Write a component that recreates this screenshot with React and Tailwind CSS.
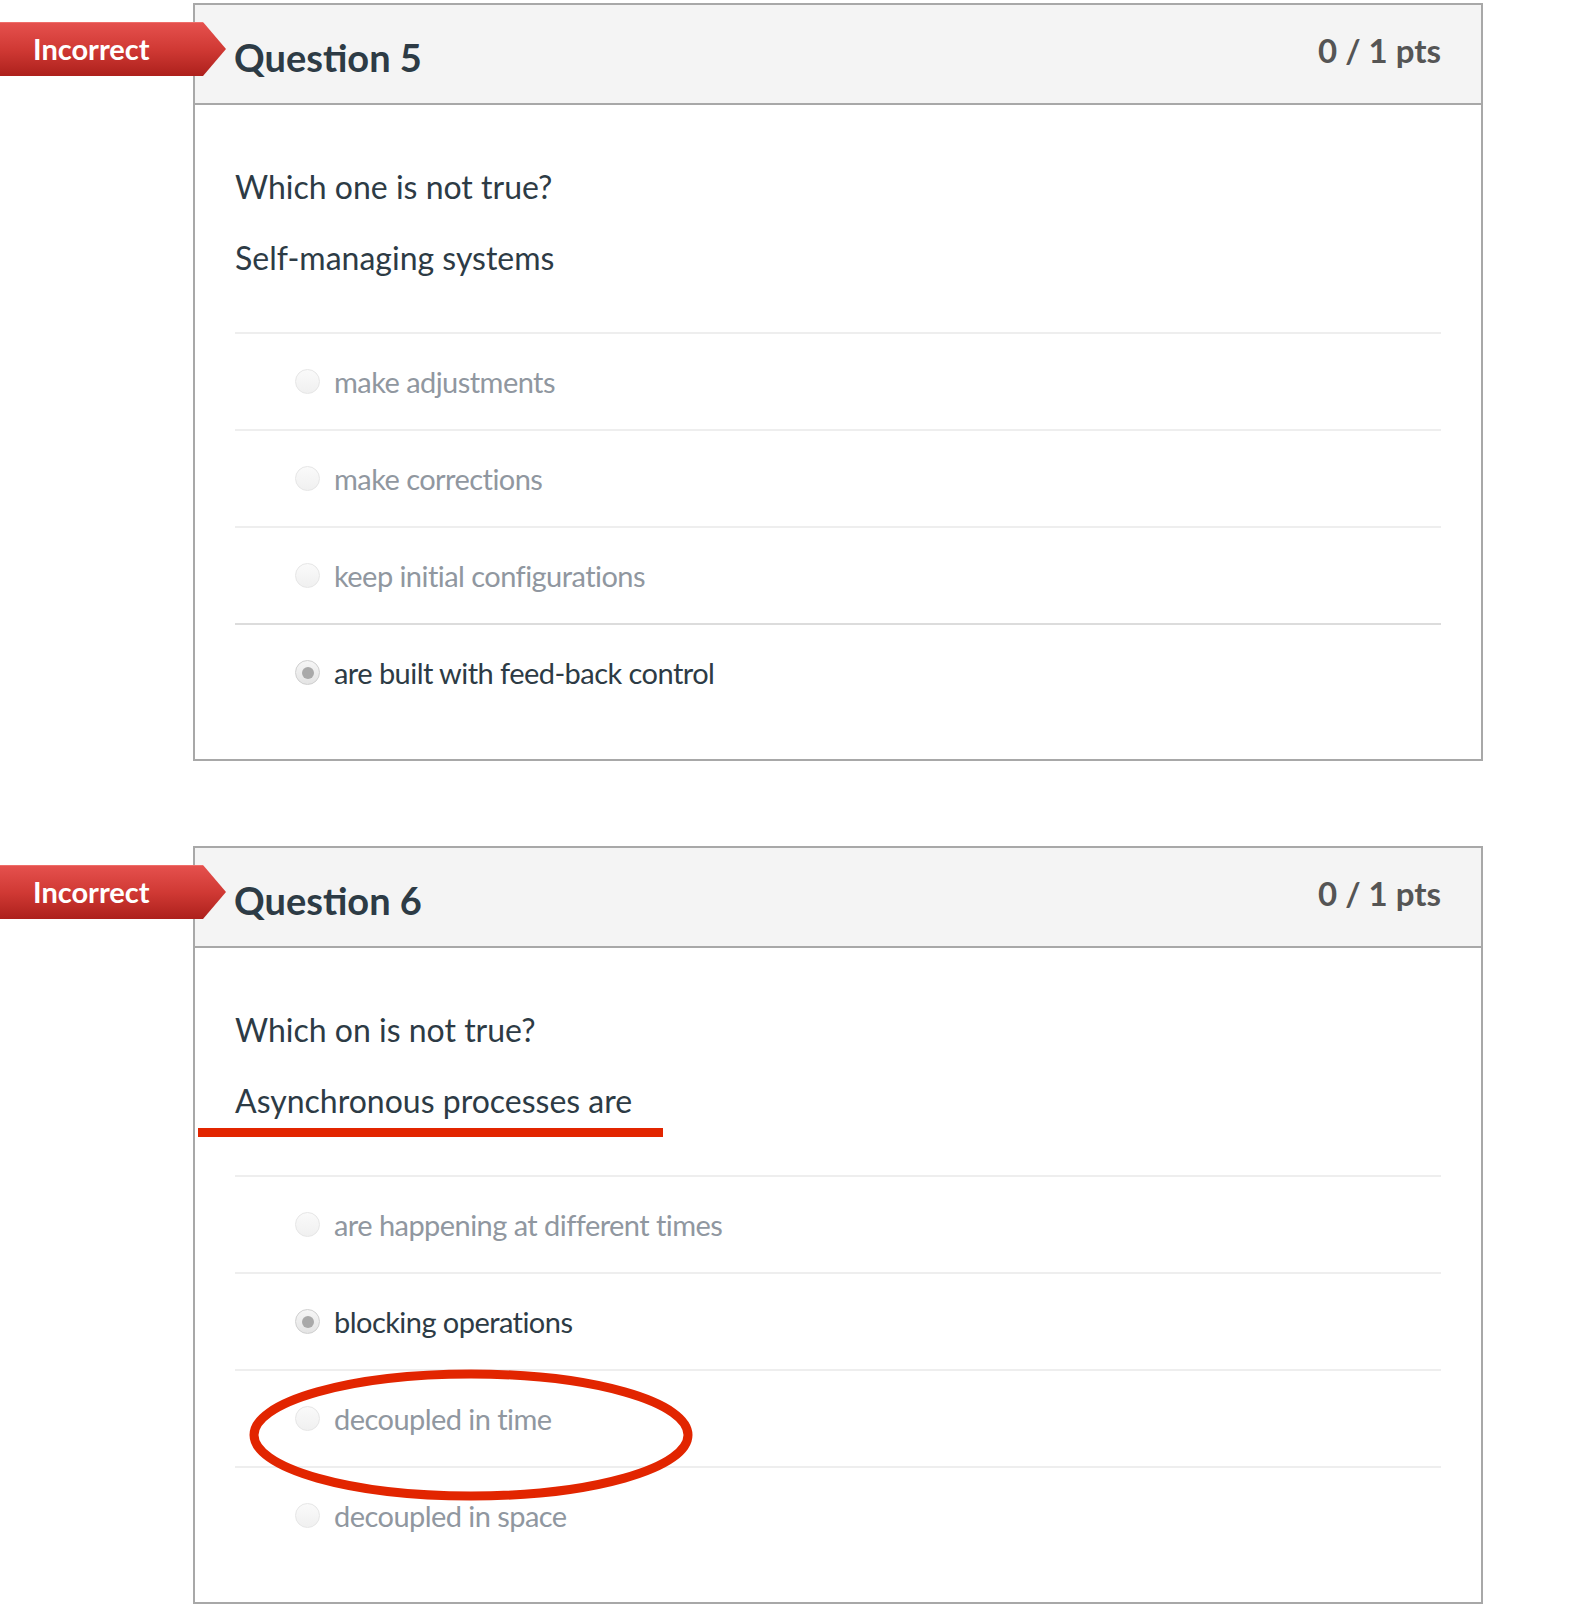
import React from 'react';

const questions = [
  {
    number: 5,
    prompt: 'Which one is not true?',
    stem: 'Self-managing systems',
    answers: [
      { text: 'make adjustments' },
      { text: 'make corrections' },
      { text: 'keep initial configurations' },
      { text: 'are built with feed-back control', selected: true },
    ],
  },
  {
    number: 6,
    prompt: 'Which on is not true?',
    stem: 'Asynchronous processes are',
    answers: [
      { text: 'are happening at different times' },
      { text: 'blocking operations', selected: true },
      { text: 'decoupled in time' },
      { text: 'decoupled in space' },
    ],
  },
];

const Radio = ({ selected }) =>
  selected ? (
    <span className="flex h-[25px] w-[25px] shrink-0 items-center justify-center rounded-full border border-[#cfcfcf] bg-gradient-to-b from-[#f6f6f6] to-[#e4e4e4]">
      <span className="h-[12px] w-[12px] rounded-full bg-[#a9a9a9]" />
    </span>
  ) : (
    <span className="h-[25px] w-[25px] shrink-0 rounded-full border border-[#e6e6e6] bg-gradient-to-b from-[#fafafa] to-[#f0f0f0]" />
  );

const IncorrectBadge = () => (
  <div className="absolute left-0 top-[19px] h-[54px] w-[226px] [clip-path:polygon(0_0,203px_0,226px_50%,203px_100%,0_100%)] bg-gradient-to-b from-[#e5504d] via-[#d03934] to-[#ad201c] border-t border-[#ef6d69]">
    <span className="block pl-[33px] pt-[9px] text-[29px] leading-[34px] font-bold text-white">Incorrect</span>
  </div>
);

const QuestionCard = ({ number, prompt, stem, answers }) => (
  <div className="relative">
    <IncorrectBadge />
    <div className="ml-[193px] w-[1290px] border-2 border-[#a8a8a8]">
      {/* Header */}
      <div className="flex h-[100px] items-start justify-between border-b-2 border-[#a8a8a8] bg-[#f4f4f4] pl-[39px] pr-[40px]">
        <h2 className="pt-[33px] text-[38px] leading-[38px] font-bold text-[#2d3b45]">Question {number}</h2>
        <div className="pt-[29px] text-[33px] leading-[33px] font-bold text-[#555555]">0 / 1 pts</div>
      </div>

      {/* Body */}
      <div className="px-[40px] pt-[59px] pb-[39px]">
        <p className="text-[32px] leading-[46px] text-[#2d3b45]">{prompt}</p>
        <p className="mt-[25px] text-[32px] leading-[46px] text-[#2d3b45]">{stem}</p>
        <div className="mt-[51px]">
          {answers.map((a, i) => (
            <div
              key={i}
              className={`flex h-[97px] items-center gap-[14px] border-t-2 pl-[60px] ${i === 3 && a.selected ? 'border-[#dcdcdc]' : 'border-[#eeeeee]'}`}
            >
              <Radio selected={a.selected} />
              <span className={`text-[29px] leading-[40px] tracking-[-0.55px] ${a.selected ? 'text-[#2d3b45]' : 'text-[#9097a0]'}`}>{a.text}</span>
            </div>
          ))}
        </div>
      </div>
    </div>
  </div>
);

export default function App() {
  return (
    <div className="relative h-[1624px] w-[1590px] overflow-hidden bg-white pt-[3px] font-['Lato','Open_Sans',sans-serif]">
      <QuestionCard {...questions[0]} />
      <div className="mt-[85px]">
        <QuestionCard {...questions[1]} />
      </div>

      {/* Red annotations */}
      <div className="absolute left-[198px] top-[1128px] h-[9px] w-[465px] bg-[#e22500]" />
      <svg className="absolute left-[240px] top-[1360px]" width="470" height="150" viewBox="0 0 470 150">
        <ellipse cx="231" cy="75" rx="217" ry="61" fill="none" stroke="#e22500" strokeWidth="9" />
      </svg>
    </div>
  );
}
